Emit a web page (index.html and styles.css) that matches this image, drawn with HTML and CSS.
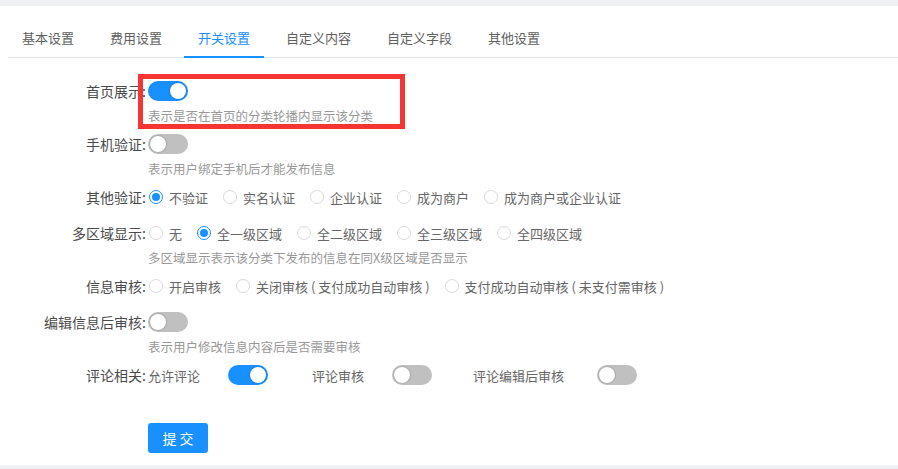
FILE: index.html
```html
<!DOCTYPE html>
<html lang="zh-CN">
<head>
<meta charset="utf-8">
<title>开关设置</title>
<link rel="stylesheet" href="styles.css">
</head>
<body>
<div class="panel">
  <div class="tabs">
    <div class="tab">基本设置</div>
    <div class="tab">费用设置</div>
    <div class="tab active">开关设置</div>
    <div class="tab">自定义内容</div>
    <div class="tab">自定义字段</div>
    <div class="tab">其他设置</div>
  </div>
  <form class="form">
    <div class="row has-hint">
      <div class="label">首页展示:</div>
      <div class="field">
        <div class="line"><span class="switch on"></span></div>
        <div class="hint">表示是否在首页的分类轮播内显示该分类</div>
      </div>
      <div class="mark"></div>
    </div>
    <div class="row has-hint">
      <div class="label">手机验证:</div>
      <div class="field">
        <div class="line"><span class="switch"></span></div>
        <div class="hint">表示用户绑定手机后才能发布信息</div>
      </div>
    </div>
    <div class="row">
      <div class="label">其他验证:</div>
      <div class="field">
        <div class="line">
          <span class="radio-item"><span class="radio checked"></span>不验证</span>
          <span class="radio-item"><span class="radio"></span>实名认证</span>
          <span class="radio-item"><span class="radio"></span>企业认证</span>
          <span class="radio-item"><span class="radio"></span>成为商户</span>
          <span class="radio-item"><span class="radio"></span>成为商户或企业认证</span>
        </div>
      </div>
    </div>
    <div class="row has-hint">
      <div class="label">多区域显示:</div>
      <div class="field">
        <div class="line">
          <span class="radio-item"><span class="radio"></span>无</span>
          <span class="radio-item"><span class="radio checked"></span>全一级区域</span>
          <span class="radio-item"><span class="radio"></span>全二级区域</span>
          <span class="radio-item"><span class="radio"></span>全三级区域</span>
          <span class="radio-item"><span class="radio"></span>全四级区域</span>
        </div>
        <div class="hint">多区域显示表示该分类下发布的信息在同X级区域是否显示</div>
      </div>
    </div>
    <div class="row">
      <div class="label">信息审核:</div>
      <div class="field">
        <div class="line">
          <span class="radio-item"><span class="radio"></span>开启审核</span>
          <span class="radio-item"><span class="radio"></span>关闭审核 ( 支付成功自动审核 )</span>
          <span class="radio-item"><span class="radio"></span>支付成功自动审核 ( 未支付需审核 )</span>
        </div>
      </div>
    </div>
    <div class="row has-hint">
      <div class="label">编辑信息后审核:</div>
      <div class="field">
        <div class="line"><span class="switch"></span></div>
        <div class="hint">表示用户修改信息内容后是否需要审核</div>
      </div>
    </div>
    <div class="row">
      <div class="label">评论相关:</div>
      <div class="field">
        <div class="line">
          <span class="sub-item"><span class="sub-text">允许评论</span><span class="switch on"></span></span>
          <span class="sub-item tight"><span class="sub-text">评论审核</span><span class="switch"></span></span>
          <span class="sub-item"><span class="sub-text wide">评论编辑后审核</span><span class="switch"></span></span>
        </div>
      </div>
    </div>
    <div class="actions">
      <button type="button" class="btn">提 交</button>
    </div>
  </form>
</div>
</body>
</html>
```

FILE: styles.css
```css
html, body {
  margin: 0;
  padding: 0;
  background: #f0f1f5;
}
body {
  font-family: "Noto Sans CJK SC", "Noto Sans", sans-serif;
  font-size: 13px;
  color: #333;
}
.panel {
  margin-top: 6px;
  background: #fff;
  padding: 0 0 12px 8px;
}
.tabs {
  display: flex;
  padding-top: 12px;
  border-bottom: 1px solid #e4e7ed;
}
.tab {
  position: relative;
  height: 39px;
  line-height: 40px;
  padding: 0 14px;
  margin-right: 8px;
  color: #606060;
  font-size: 13px;
  white-space: nowrap;
}
.tab.active {
  color: #1890ff;
}
.tab.active::after {
  content: "";
  position: absolute;
  left: 0;
  right: 0;
  bottom: -1px;
  height: 2px;
  background: #1890ff;
}
.form {
  padding-top: 21px;
}
.row {
  position: relative;
  display: flex;
  margin-bottom: 12px;
}
.row.has-hint {
  margin-bottom: 9px;
}
.label {
  width: 138px;
  padding-right: 2px;
  text-align: right;
  line-height: 24px;
  font-size: 14px;
  color: #4a4a4a;
  white-space: nowrap;
}
.field {
  display: flex;
  flex-direction: column;
}
.line {
  display: flex;
  align-items: center;
  height: 24px;
  color: #666;
}
.hint {
  margin-top: 6px;
  line-height: 14px;
  font-size: 12.5px;
  color: #999;
  white-space: nowrap;
}
.switch {
  position: relative;
  display: inline-block;
  width: 40px;
  height: 20px;
  border-radius: 10px;
  background: #c0c0c0;
  flex: none;
}
.switch::after {
  content: "";
  position: absolute;
  top: 2px;
  left: 2px;
  width: 16px;
  height: 16px;
  border-radius: 50%;
  background: #fff;
  box-shadow: 0 0 2px rgba(0, 0, 0, 0.35);
}
.switch.on {
  background: #1890ff;
}
.switch.on::after {
  left: 22px;
}
.radio-item {
  display: inline-flex;
  align-items: center;
  margin-right: 14px;
  white-space: pre;
}
.radio {
  position: relative;
  box-sizing: border-box;
  width: 14px;
  height: 14px;
  margin: 0 6px 0 1px;
  border: 1px solid #d9d9d9;
  border-radius: 50%;
  background: #fff;
  flex: none;
}
.radio.checked {
  border-color: #1890ff;
}
.radio.checked::after {
  content: "";
  position: absolute;
  top: 2px;
  left: 2px;
  width: 8px;
  height: 8px;
  border-radius: 50%;
  background: #1890ff;
}
.sub-item {
  display: inline-flex;
  align-items: center;
  margin-right: 44px;
}
.sub-item.tight {
  margin-right: 41px;
}
.sub-text {
  margin-right: 28px;
  white-space: nowrap;
}
.sub-text.wide {
  margin-right: 33px;
}
.mark {
  position: absolute;
  left: 130px;
  top: -5px;
  width: 257px;
  height: 45px;
  border: 5px solid #f53434;
  pointer-events: none;
}
.actions {
  padding-left: 140px;
  margin-top: 36px;
}
.btn {
  width: 60px;
  height: 30px;
  border: none;
  border-radius: 3px;
  background: #1890ff;
  color: #fff;
  font-family: "Noto Sans CJK SC", "Noto Sans", sans-serif;
  font-size: 14px;
  padding: 0;
  cursor: pointer;
}
```
